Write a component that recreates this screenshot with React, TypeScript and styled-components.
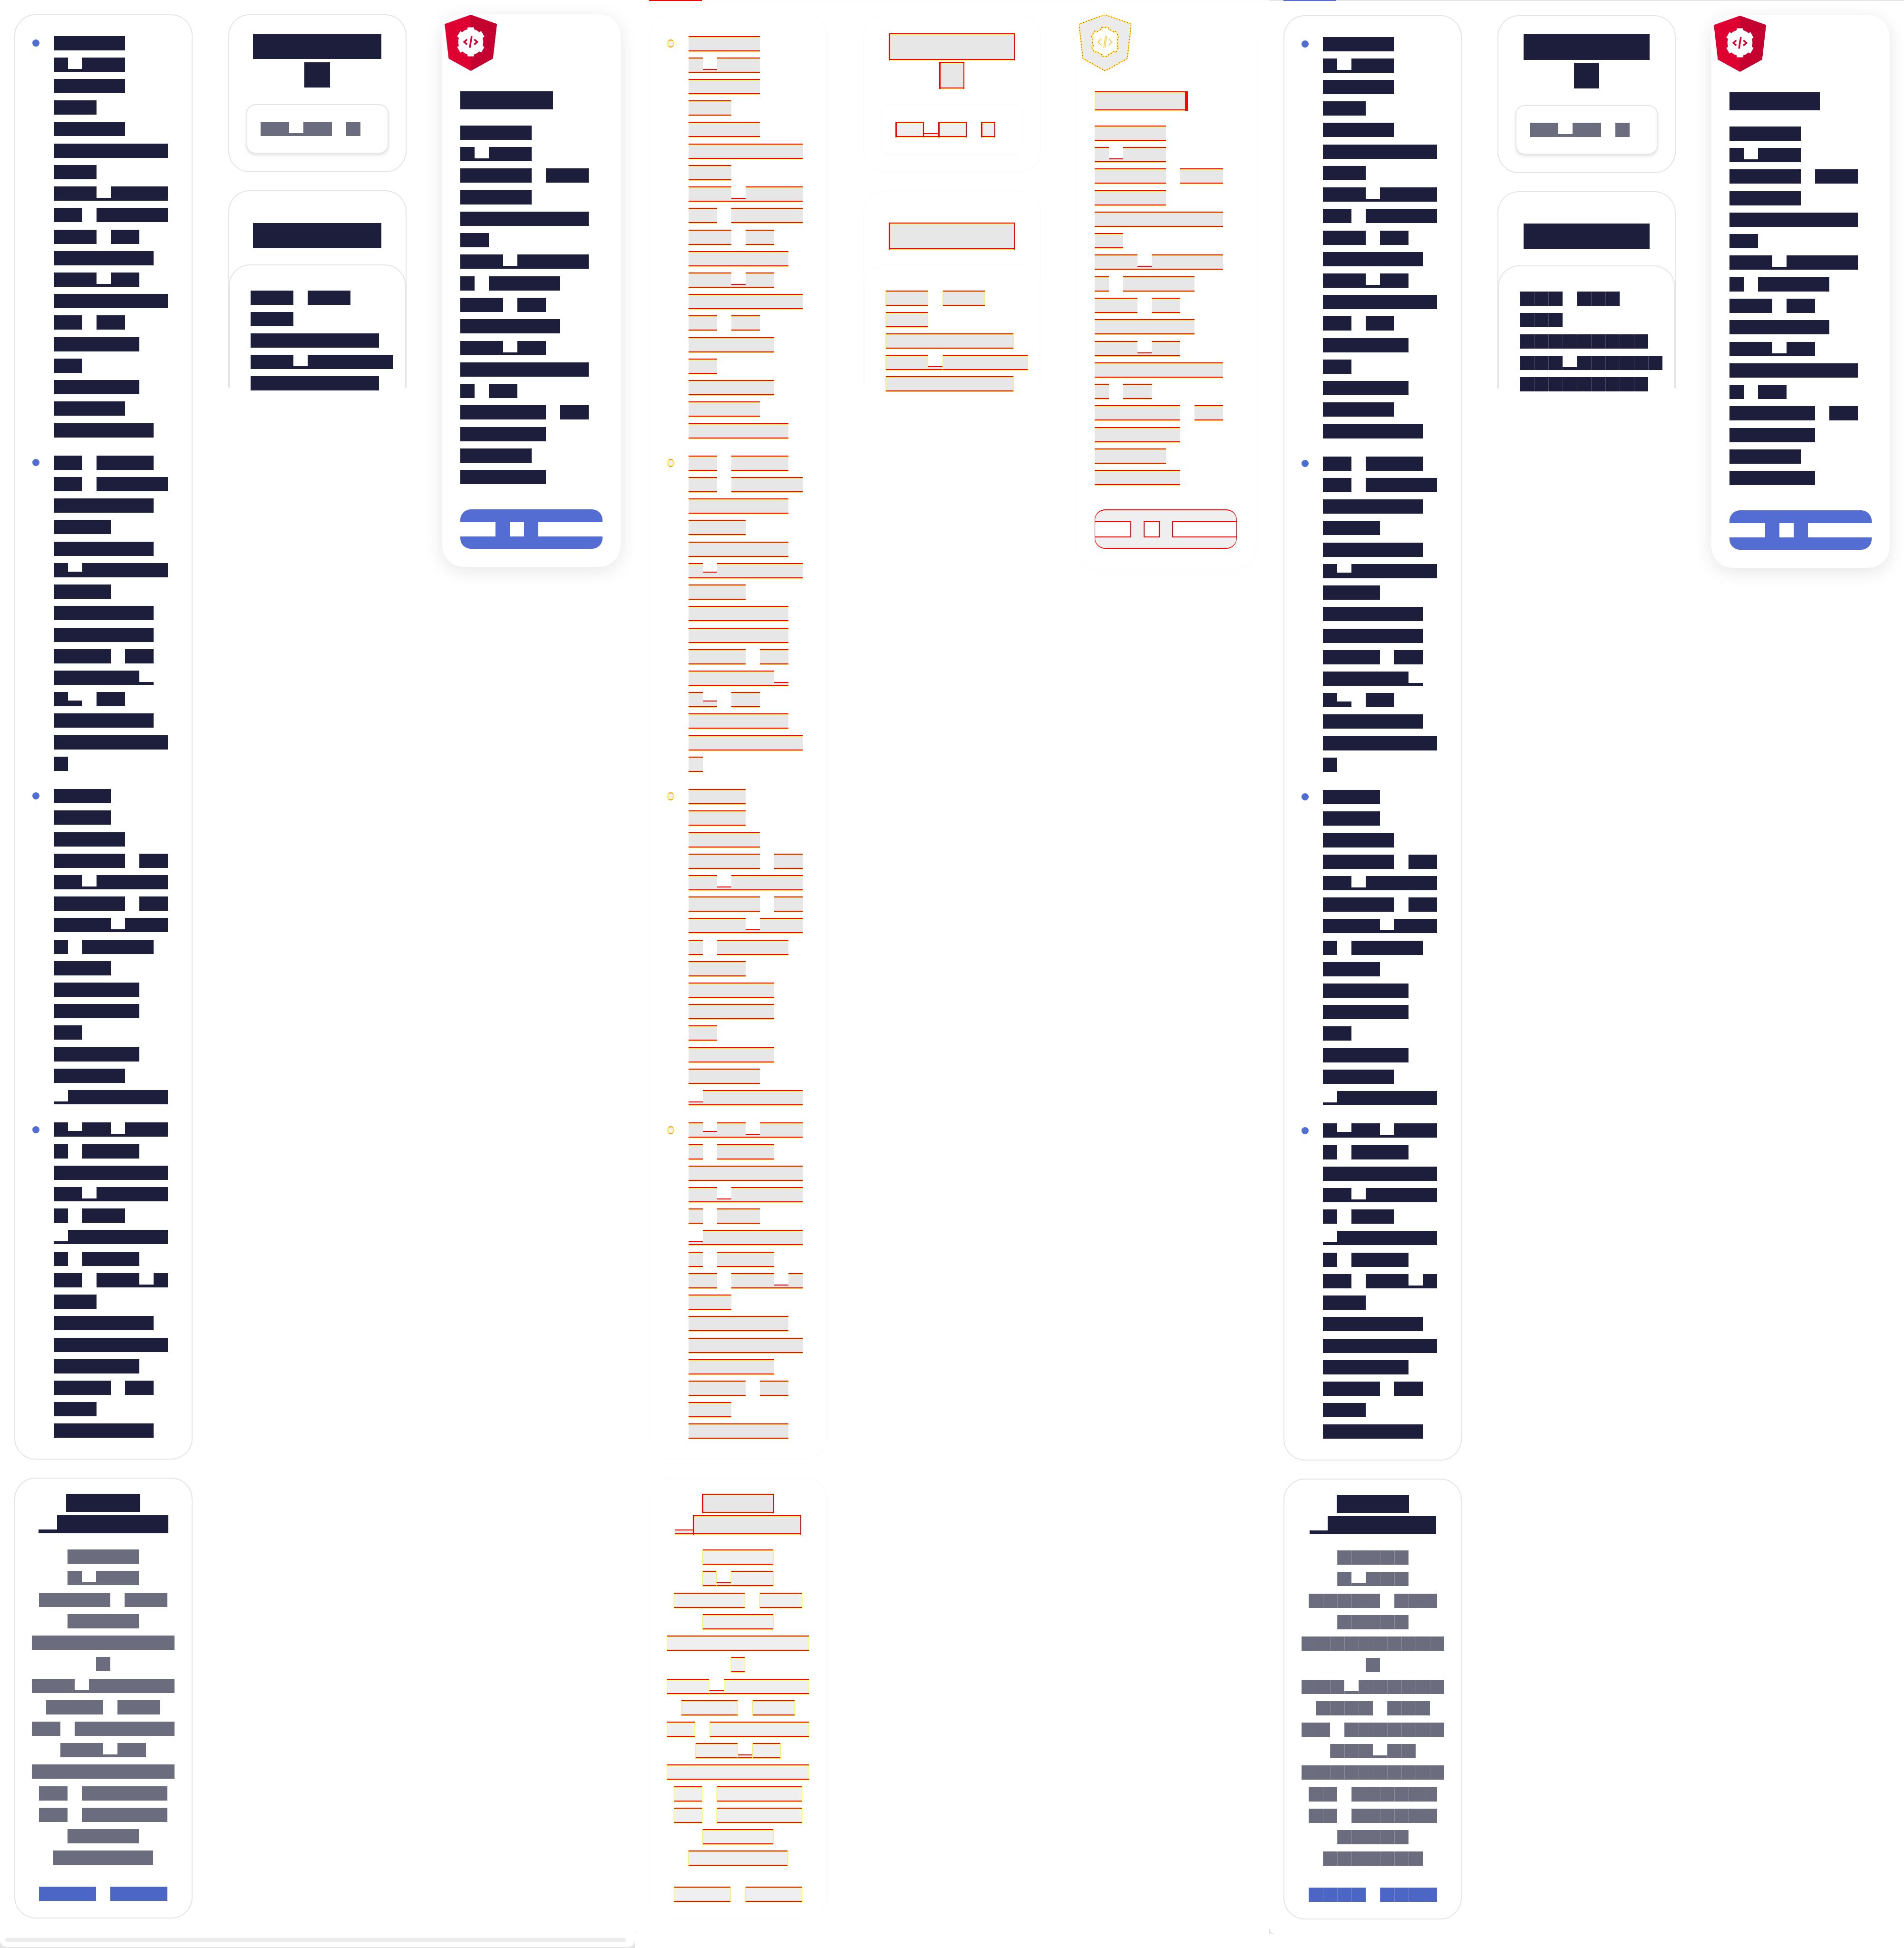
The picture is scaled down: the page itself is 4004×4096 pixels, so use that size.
import React from "react";
import styled, { createGlobalStyle, css, ThemeProvider } from "styled-components";

type Mode = "before" | "diff" | "after";
type Tone = "ink" | "muted" | "link" | "paper";
type Edge = "none" | "red" | "yellow" | "end";

interface PanelTheme {
  mode: Mode;
  line: string;
  shadow: string;
  tones: Record<Tone, string>;
}

const before: PanelTheme = {
  mode: "before",
  line: "#e5e5e5",
  shadow: "rgba(0, 0, 0, 0.1)",
  tones: { ink: "#1c1e3b", muted: "#6b6c7e", link: "#4b66c4", paper: "#ffffff" },
};
const after: PanelTheme = { ...before, mode: "after" };
const diff: PanelTheme = {
  mode: "diff",
  line: "#fcfcfc",
  shadow: "rgba(0, 0, 0, 0.01)",
  tones: { ink: "#e7e7e7", muted: "#efefef", link: "#efefef", paper: "#ffffff" },
};

const Global = createGlobalStyle`
  *, *::before, *::after { box-sizing: border-box; }
  body { margin: 0; background: #ffffff; font-family: "Liberation Sans", sans-serif; }
  ul, p, h1, h2, h3 { margin: 0; padding: 0; list-style: none; font-weight: 400; }
`;

const Board = styled.main`
  display: grid;
  grid-template-columns: repeat(3, 1fr);
  min-height: 100vh;
`;

const Shell = styled.section`
  position: relative;
  display: flex;
  background: ${({ theme }) => (theme.mode === "before" ? theme.line : "#ffffff")};
`;

const Sheet = styled.div`
  flex: 1;
  display: flex;
  flex-direction: column;
  margin-bottom: 2px;
  padding-bottom: ${({ theme }) => (theme.mode === "after" ? 9 : 11)}px;
  border-radius: 0 0 15px 15px;
  background: #ffffff;
`;

const TopRule = styled.div`
  position: absolute;
  inset: 0 0 auto 0;
  height: 2px;
  padding-left: 30px;
  background: ${({ theme }) => (theme.mode === "before" ? "transparent" : theme.line)};
`;

const TopMark = styled.div`
  width: 111px;
  height: 2px;
  background: ${({ theme }) =>
    theme.mode === "diff" ? "#ff0000" : theme.mode === "after" ? "#536dd2" : "transparent"};
`;

const CornerMark = styled.div`
  position: absolute;
  left: 0;
  bottom: 30px;
  width: 14px;
  height: 13px;
  background: radial-gradient(circle at 100% 0, transparent 13px, ${({ theme }) => theme.line} 14px);
`;

const Columns = styled.div`
  flex: 1;
  display: grid;
  grid-template-columns: repeat(3, 1fr);
  gap: 75px;
  padding: ${({ theme }) => (theme.mode === "after" ? 32 : 30)}px 30px 41px;
`;

const Track = styled.div`
  height: 8px;
  margin: 0 19px 0 11px;
  border-radius: 4px;
  background: ${({ theme }) => (theme.mode === "before" ? "#ebebeb" : "transparent")};
`;

const Column = styled.div`
  display: flex;
  flex-direction: column;
  gap: 38px;
  min-width: 0;
`;

const Card = styled.div`
  display: flex;
  flex-direction: column;
  border: 2px solid ${({ theme }) => theme.line};
  border-radius: 45px;
  background: #ffffff;
`;

const ListCard = styled(Card)`
  flex: 64 1 auto;
  padding: 36px;
`;

const List = styled.ul`
  flex: 1;
  display: flex;
  flex-direction: column;
  gap: 23px;
`;

const Item = styled.li<{ $rows: number }>`
  flex: ${({ $rows }) => $rows} 1 auto;
  display: flex;
  gap: 30px;
`;

const Dot = styled.span`
  flex: none;
  width: 15px;
  height: ${({ theme }) => (theme.mode === "diff" ? 17 : 15)}px;
  margin-top: 15px;
  border-radius: 50%;
  background: #506dd3;
  ${({ theme }) =>
    theme.mode === "diff" &&
    css`
      background: #efefef;
      border: 2px solid #ffee00;
      border-block-color: #ff9900;
    `}
`;

const NoteCard = styled(Card)`
  flex: 18 1 auto;
  padding: 28px;
`;

interface LinesStyle {
  $unit: number;
  $block: number;
  $row: number;
  $rows: number;
  $center?: boolean;
  $space?: number;
  $min?: number;
}

const LinesBox = styled.div<LinesStyle>`
  --unit: ${({ $unit }) => $unit}px;
  --block: ${({ $block }) => $block}px;
  flex: ${({ $rows }) => $rows} 1 auto;
  display: grid;
  grid-auto-rows: minmax(${({ $row }) => $row}px, 1fr);
  justify-items: ${({ $center }) => ($center ? "center" : "start")};
  min-height: ${({ $min }) => $min ?? 0}px;
  margin-bottom: ${({ $space }) => $space ?? 0}px;
`;

const Line = styled.span`
  display: flex;
  align-items: center;
  padding-top: ${({ theme }) => (theme.mode === "diff" ? 3 : 0)}px;
`;

const Word = styled.span`
  display: flex;
  align-items: flex-end;
`;

interface RunStyle {
  $count: number;
  $low: number;
  $tone: Tone;
  $seams?: boolean;
  $edge: Edge;
}

const edgeShadow: Record<Edge, string> = {
  none: "none",
  red: "inset 3px 0 #ff0000, inset -2px 0 #ff0000",
  yellow: "inset 1px 0 #ffff00, inset -1px 0 #ffff00",
  end: "inset 1px 0 #ffff00, 6px 0 #ff0000",
};

const Run = styled.span<RunStyle>`
  flex: none;
  width: calc(var(--unit) * ${({ $count }) => $count});
  height: ${({ $low }) => ($low ? `${$low}px` : "var(--block)")};
  background-color: ${({ theme, $tone }) => theme.tones[$tone]};
  ${({ theme, $seams }) =>
    theme.mode === "after" &&
    $seams &&
    css`
      background-image: linear-gradient(to right, rgba(255, 255, 255, 0.2) 1px, transparent 1px);
      background-size: var(--unit) 100%;
    `}
  ${({ theme, $tone, $low, $edge }) =>
    theme.mode === "diff" &&
    $tone !== "paper" &&
    css`
      height: ${$low ? `${$low + 3}px` : "calc(var(--block) + 3px)"};
      background-image: linear-gradient(
        to bottom,
        #ff0000 2px,
        ${$low ? theme.tones[$tone] : "#ffff00"} 2px 3px,
        ${theme.tones[$tone]} 3px calc(100% - 3px),
        #ff0000 calc(100% - 3px) calc(100% - 1px),
        #ffff00 calc(100% - 1px)
      );
      box-shadow: ${$low ? "none" : edgeShadow[$edge]};
    `}
  ${({ theme, $tone }) =>
    theme.mode === "diff" &&
    $tone === "paper" &&
    css`
      box-shadow: 0 0 0 2px #ff0000;
    `}
`;

const Space = styled.span<{ $count: number }>`
  flex: none;
  width: calc(var(--unit) * ${({ $count }) => $count});
`;

interface BlocksProps {
  text: string;
  tone: Tone;
  low?: number;
  seams?: boolean;
  edge?: Edge;
}

/* X is a full block, _ a descender bar, a comma a taller bar, a space is empty. */
function Blocks({ text, tone, low = 6, seams, edge = "none" }: BlocksProps) {
  const runs = text.match(/X+|_+|,+| +/g) ?? [];
  return (
    <Word>
      {runs.map((run, i) =>
        run[0] === " " ? (
          <Space key={i} $count={run.length} />
        ) : (
          <Run
            key={i}
            $count={run.length}
            $low={run[0] === "_" ? low : run[0] === "," ? 12 : 0}
            $tone={tone}
            $seams={seams}
            $edge={edge}
          />
        )
      )}
    </Word>
  );
}

interface LinesProps extends Omit<BlocksProps, "text"> {
  rows: string[];
  unit?: number;
  block?: number;
  row?: number;
  center?: boolean;
  space?: number;
  min?: number;
  as?: React.ElementType;
}

function Lines({ rows, unit = 30, block = 30, row = 45, center, space, min, as = "p", ...rest }: LinesProps) {
  return (
    <LinesBox
      as={as}
      $unit={unit}
      $block={block}
      $row={row}
      $rows={rows.length}
      $center={center}
      $space={space}
      $min={min}
    >
      {rows.map((text, i) => (
        <Line key={i}>
          <Blocks text={text} {...rest} />
        </Line>
      ))}
    </LinesBox>
  );
}

const NoteLink = styled.a`
  --unit: 30px;
  --block: 30px;
  flex: 1 1 auto;
  display: flex;
  justify-content: center;
  min-height: 45px;
  text-decoration: none;
`;

const PickerCard = styled(Card)`
  padding: 35px 36px 37px;
`;

const Picker = styled.button`
  --unit: 30px;
  --block: 30px;
  display: flex;
  align-items: center;
  gap: 30px;
  height: 104px;
  padding: 0 28px;
  border: 2px solid ${({ theme }) => theme.line};
  border-radius: 19px;
  background: #ffffff;
  box-shadow: 0 4px 6px ${({ theme }) => theme.shadow};
`;

const PreviewCard = styled(Card)`
  padding-top: 63px;
  border-bottom: 0;
  border-radius: 45px 45px 0 0;
`;

const PreviewBody = styled(Card)`
  margin: 0 -1px;
  padding: 45px 0 0 44px;
  border-bottom: 0;
  border-radius: 45px 45px 0 0;
`;

const FeatureCard = styled.article`
  display: flex;
  flex-direction: column;
  padding: 0 38px 38px;
  border-radius: 45px;
  background: #ffffff;
  box-shadow: 0 8px 38px ${({ theme }) => theme.shadow};
`;

const LogoRow = styled.div`
  height: 158px;
  margin: 0 -33px;
  padding-top: 1px;
`;

const Action = styled.button`
  --unit: 30px;
  --block: 30px;
  display: flex;
  align-items: center;
  justify-content: center;
  height: 83px;
  padding: 0;
  border: 0;
  border-radius: 22px;
  overflow: hidden;
  background: #536dd2;
  ${({ theme }) =>
    theme.mode === "diff" &&
    css`
      background: #efefef;
      border: solid #ff0000;
      border-width: 2px 1px;
    `}
`;

function Logo({ mode }: { mode: Mode }) {
  const isDiff = mode === "diff";
  const left = isDiff ? "#ebebeb" : "#dd0031";
  const right = isDiff ? "#ebebeb" : "#c3002f";
  const outline = "M125 30 31.9 63.2l14.2 123.1L125 230l78.9-43.7 14.2-123.1z";
  const gear =
    "M113.3 75h23.4v6.6a46 46 0 0 1 19 10.8l6.4-4.2 11.6 20.2-6.4 3.8a46 46 0 0 1 0 28.8l6.4 3.8-11.6 20.2-6.4-4.2a46 46 0 0 1-19 10.8v6.6h-23.4v-6.6a46 46 0 0 1-19-10.8l-6.4 4.2-11.6-20.2 6.4-3.8a46 46 0 0 1 0-28.8l-6.4-3.8 11.6-20.2 6.4 4.2a46 46 0 0 1 19-10.8z";
  return (
    <svg width="110" height="118" viewBox="31.9 30 186.2 200" aria-hidden="true">
      <path d={outline} fill={left} />
      <path d="M125 30v200l78.9-43.7 14.2-123.1z" fill={right} />
      <path d={gear} fill="#ffffff" />
      <g fill="none" strokeWidth="6">
        <path d="m112 118-10.500 9 10.500 9" stroke={left} />
        <path d="m137.500 118 10.500 9-10.500 9" stroke={right} />
        <path d="M128.300 106.500 121.500 147.500" stroke={left} />
      </g>
      {isDiff && (
        <g fill="none" strokeWidth="3">
          <path d={outline} stroke="#ffee00" />
          <path d={outline} stroke="#ff3300" strokeDasharray="3 7" />
          <path d={gear} stroke="#ffee00" />
          <path d={gear} stroke="#ff3300" strokeDasharray="3 9" />
          <path
            d="m112 114-13 13 13 13M138 114l13 13-13 13M131 106l-6 41M126 106l-6 41"
            stroke="#ffcc00"
            strokeWidth="2"
          />
        </g>
      )}
    </svg>
  );
}

const B = (n: number) => "X".repeat(n);

const items: string[][] = [
  [
    B(5), "X_XXX", B(5), B(3), B(5), B(8), B(3), "XXX_XXXX", "XX XXXXX", "XXX XX", B(7), "XXX_XX",
    B(8), "XX XX", B(6), B(2), B(6), B(5), B(7),
  ],
  [
    "XX XXXX", "XX XXXXX", B(7), B(4), B(7), "X,XXXXXX", B(4), B(7), B(7), "XXXX XX", "XXXXXX_",
    "X, XX", B(7), B(8), B(1),
  ],
  [
    B(4), B(4), B(5), "XXXXX XX", "XX_XXXXX", "XXXXX XX", "XXXX_XXX", "X XXXXX", B(4), B(6), B(6),
    B(2), B(6), B(5), "_XXXXXXX",
  ],
  [
    "X,XX_XXX", "X XXXX", B(8), "XX_XXXXX", "X XXX", "_XXXXXXX", "X XXXX", "XX XXX_X", B(3), B(7),
    B(8), B(6), "XXXX XX", B(3), B(7),
  ],
];

const note = [
  B(5), "X_XXX", "XXXXX XXX", B(5), B(10), "X", "XXX_XXXXXX", "XXXX XXX", "XX XXXXXXX", "XXX_XX",
  B(10), "XX XXXXXX", "XX XXXXXX", B(5), B(7),
];

const preview = ["XXX XXX", B(3), B(9), "XXX_XXXXXX", B(9)];

const feature = [
  B(5), "X_XXX", "XXXXX XXX", B(5), B(9), B(2), "XXX_XXXXX", "X XXXXX", "XXX XX", B(7), "XXX_XX",
  B(9), "X XX", "XXXXXX XX", B(6), B(5), B(6),
];

function Panel({ theme }: { theme: PanelTheme }) {
  const first = theme.mode === "before";
  const big = { unit: first ? 54 : 53, block: first ? 53 : 54, row: 60 };
  const small = { unit: first ? 39 : 38, block: 38, row: 45, low: 8 };
  return (
    <ThemeProvider theme={theme}>
      <Shell>
        <Sheet>
          <Columns>
            <Column>
              <ListCard>
                <List>
                  {items.map((rows, i) => (
                    <Item key={i} $rows={rows.length}>
                      <Dot />
                      <Lines rows={rows} tone="ink" as="div" />
                    </Item>
                  ))}
                </List>
              </ListCard>
              <NoteCard>
                <Lines as="h2" rows={["XXXX", "_XXXXXX"]} {...small} center tone="ink" space={23} edge="red" />
                <Lines rows={note} center tone="muted" space={30} seams edge="yellow" />
                <NoteLink href="#" aria-label="Details">
                  <Line>
                    <Blocks text="XXXX XXXX" tone="link" seams edge="yellow" />
                  </Line>
                </NoteLink>
              </NoteCard>
            </Column>
            <Column>
              <PickerCard>
                <Lines as="h1" rows={[B(5), "X"]} {...big} center tone="ink" space={32} edge="red" />
                <Picker type="button" aria-label="Choose">
                  <Line>
                    <Blocks text="XX_XX" tone="muted" edge="red" />
                  </Line>
                  <Line>
                    <Blocks text="X" tone="muted" edge="red" />
                  </Line>
                </Picker>
              </PickerCard>
              <PreviewCard>
                <Lines as="h2" rows={[B(5)]} {...big} center tone="ink" space={31} edge="red" />
                <PreviewBody>
                  <Lines rows={preview} tone="ink" space={-14} min={226} seams edge="yellow" />
                </PreviewBody>
              </PreviewCard>
            </Column>
            <Column>
              <FeatureCard>
                <LogoRow>
                  <Logo mode={theme.mode} />
                </LogoRow>
                <Lines as="h3" rows={[B(5)]} {...small} tone="ink" space={23} edge="end" />
                <Lines rows={feature} tone="ink" space={45} min={770} />
                <Action type="button" aria-label="Start">
                  <Blocks text="XXXX X XXXXXX" tone="paper" />
                </Action>
              </FeatureCard>
            </Column>
          </Columns>
          <Track />
        </Sheet>
        <TopRule>
          <TopMark />
        </TopRule>
        {!first && <CornerMark />}
      </Shell>
    </ThemeProvider>
  );
}

export default function App() {
  return (
    <>
      <Global />
      <Board>
        <Panel theme={before} />
        <Panel theme={diff} />
        <Panel theme={after} />
      </Board>
    </>
  );
}
